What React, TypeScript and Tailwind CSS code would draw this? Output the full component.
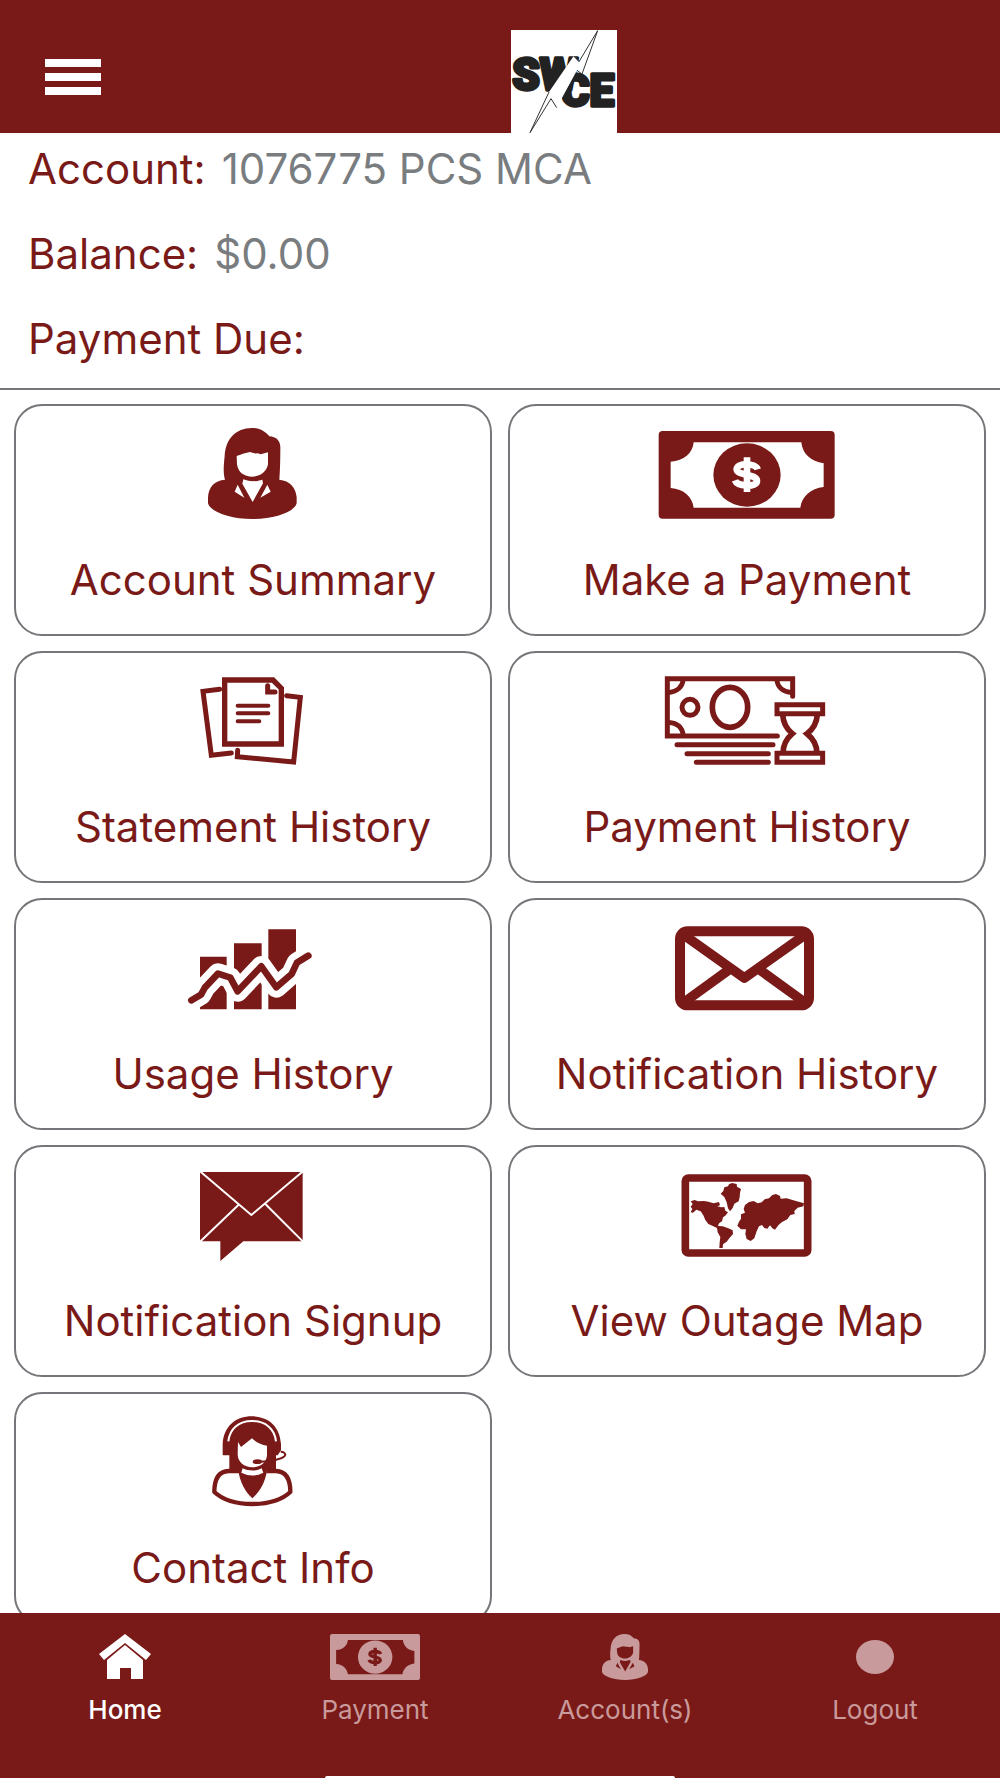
import React from "react";

type IconProps = { className?: string; viewBox?: string; cut?: string };

const TILE_ICON = "w-[210px] h-24";

function Logo() {
  return (
    <svg
      className="w-[106px] h-[103px] bg-white"
      viewBox="33 30 318 309"
      role="img"
      aria-label="SWCE"
    >
      <g
        fill="#222"
        stroke="#222"
        strokeWidth="10"
        strokeLinejoin="round"
        fontFamily="Roboto, sans-serif"
        fontWeight="900"
      >
        <text x="37" y="210" fontSize="132">SW</text>
        <text x="182" y="258" fontSize="132">CE</text>
      </g>
      <path
        fill="#fff"
        d="M293 32 237 125 221 108 147 216 90 338 153 236 170 263 231 151 246 162Z"
      />
      <path
        fill="none"
        stroke="#333"
        strokeWidth="3"
        d="M221 108 237 125 293 32 246 162 231 151M147 216 90 338 153 236 170 263"
      />
    </svg>
  );
}

function PersonIcon({
  className = TILE_ICON,
  viewBox = "-126 42 630 288",
}: IconProps) {
  return (
    <svg
      className={className}
      viewBox={viewBox}
      preserveAspectRatio="none"
      fill="currentColor"
      aria-hidden="true"
    >
      <path
        fillRule="evenodd"
        d="M186 54C136 54 107 88 104 138C101 165 99 190 105 209C73 211 56 232 54 262V280C60 305 120 327 187 327C255 327 314 305 320 280V262C317 232 300 212 268 209C270 184 271 145 271 112C271 92 258 80 238 79C225 63 207 54 186 54ZM140 138C155 133 168 128 180 126C190 130 198 131 203 130L212 133L234 127V163C230 186 210 200 187 200C162 200 144 187 141 163ZM160 208C180 216 200 215 217 209L219 220L188 276L157 221ZM143 224 163 263 134 245ZM232 224 242 245 211 263Z"
      />
    </svg>
  );
}

function CashIcon({
  className = TILE_ICON,
  viewBox = "6 27 630 288",
  cut = "#fff",
}: IconProps) {
  return (
    <svg
      className={className}
      viewBox={viewBox}
      preserveAspectRatio="none"
      fill="currentColor"
      aria-hidden="true"
    >
      <path
        fillRule="evenodd"
        d="M68 48H572Q584 48 584 60V299Q584 311 572 311H68Q56 311 56 299V60Q56 48 68 48ZM161 82C158 115 132 137 92 140V219C132 222 157 246 161 278H481C485 246 512 220 551 216V145C512 140 487 116 484 82Z"
      />
      <ellipse cx="321" cy="180" rx="101" ry="95" />
      <path
        fill="none"
        stroke={cut}
        strokeWidth="20"
        d="M321 127V231M353 163C347 143 290 142 290 163C290 183 351 175 351 198C351 218 292 215 285 196"
      />
    </svg>
  );
}

function StatementIcon() {
  return (
    <svg
      className={TILE_ICON}
      viewBox="-96 33 630 288"
      fill="none"
      stroke="currentColor"
      strokeWidth="15"
      strokeLinecap="round"
      aria-hidden="true"
    >
      <path d="M119 88 69 94 94 286 154 279M320 107 361 112 341 306 172 290 173 271" />
      <path strokeWidth="16" d="M134 60H279L304 85V252H134Z" />
      <path d="M263 77V96H285" />
      <path strokeWidth="12" d="M173 137H265M173 160H265M173 184H238" />
    </svg>
  );
}

function PaymentHistoryIcon() {
  return (
    <svg
      className={TILE_ICON}
      viewBox="6 33 630 288"
      fill="none"
      stroke="currentColor"
      strokeWidth="15"
      strokeLinecap="round"
      aria-hidden="true"
    >
      <path d="M458 109V56H82V228H412M111 254H399M141 281H385M169 307H385" />
      <path
        strokeWidth="14"
        strokeLinecap="butt"
        d="M130 58Q126 93 86 98M86 187Q126 190 130 226M410 58Q414 95 456 98"
      />
      <circle cx="150" cy="142" r="24" strokeWidth="15" />
      <ellipse cx="270" cy="142" rx="53" ry="60" strokeWidth="17" />
      <path d="M411 134H548V161H411ZM411 280H548V307H411Z" />
      <path
        strokeWidth="17"
        strokeLinecap="butt"
        d="M428 163Q430 199 457 221Q429 245 429 280M532 163Q530 199 501 221Q531 245 531 280"
      />
    </svg>
  );
}

function UsageIcon() {
  return (
    <svg
      className={TILE_ICON}
      viewBox="-66 24 630 288"
      fill="none"
      strokeLinecap="round"
      strokeLinejoin="round"
      aria-hidden="true"
    >
      <path
        fill="currentColor"
        d="M90 140H170V298H90ZM192 100H275V298H192ZM295 58H378V298H295Z"
      />
      <path
        stroke="#fff"
        strokeWidth="62"
        d="M64 271 93 254 105 232 144 191 181 203 203 244 274 169 319 232 365 192 381 158 415 137"
      />
      <path
        stroke="currentColor"
        strokeWidth="20"
        d="M64 271 93 254 105 232 144 191 181 203 203 244 274 169 319 232 365 192 381 158 415 137"
      />
    </svg>
  );
}

function EnvelopeIcon() {
  return (
    <svg
      className={TILE_ICON}
      viewBox="-24 24 630 288"
      fill="none"
      stroke="currentColor"
      strokeWidth="30"
      aria-hidden="true"
    >
      <rect x="90" y="64" width="387" height="222" rx="22" />
      <path
        strokeWidth="29"
        strokeLinejoin="round"
        d="M106 78 283 204 460 78M106 274 236 180M460 274 330 180"
      />
    </svg>
  );
}

function SignupIcon() {
  return (
    <svg
      className={TILE_ICON}
      viewBox="-96 45 630 288"
      fill="currentColor"
      aria-hidden="true"
    >
      <path d="M60 66H368V274H190L121 333V274H60Z" />
      <path
        fill="none"
        stroke="#fff"
        strokeWidth="6"
        d="M60 64 214 195 369 64M60 275 176 164M369 275 256 162"
      />
    </svg>
  );
}

function MapIcon() {
  return (
    <svg
      className={TILE_ICON}
      viewBox="-54 15 630 288"
      fill="currentColor"
      aria-hidden="true"
    >
      <rect
        x="76"
        y="54"
        width="367"
        height="225"
        rx="9"
        fill="none"
        stroke="currentColor"
        strokeWidth="23"
      />
      <path d="M92 124 104 120 114 124 132 123 145 125 161 130 177 126 180 136 172 139 184 142 193 141 196 152 204 157 196 167 189 172 186 184 177 190 174 198 188 199 205 205 218 211 219 222 209 233 200 245 189 253 188 264 178 264 179 247 181 231 173 217 171 204 160 199 145 192 136 180 130 166 122 154 109 149 99 158 92 157 97 147 92 140 98 132Z" />
      <path d="M207 73 216 69 230 72 231 80 243 87 240 98 239 112 236 124 223 131 218 144 210 154 204 145 200 127 193 111 182 101 190 93 193 82 204 79Z" />
      <path d="M255 135 267 126 281 123 293 130 305 127 314 118 327 115 337 105 348 102 360 108 362 116 380 115 400 121 432 130 430 139 413 143 403 153 404 162 391 165 382 178 365 187 355 196 345 209 337 205 330 196 322 206 313 204 306 195 297 199 290 214 283 235 272 243 260 237 256 222 258 208 243 208 232 197 237 185 243 176 243 163 255 158 251 147Z" />
    </svg>
  );
}

function ContactIcon() {
  return (
    <svg
      className={TILE_ICON}
      viewBox="-126 36 630 288"
      fill="currentColor"
      aria-hidden="true"
    >
      <path d="M98 164V132C101 79 137 49 186 49C235 49 270 79 273 132V151L263 166H258V211H118V166H105Q98 166 98 164Z" />
      <path
        fill="none"
        stroke="#fff"
        strokeWidth="6"
        d="M115 124C119 86 146 63 186 63C226 63 254 86 258 124"
      />
      <path
        stroke="currentColor"
        strokeWidth="13"
        strokeLinejoin="round"
        fill="#fff"
        d="M147 213H116C88 214 73 233 73 276C100 301 143 312 187 312C231 312 274 301 301 276C301 233 286 214 258 213H229"
      />
      <path d="M145 209 154 204H220L231 209C227 246 208 276 187 295C166 276 149 246 145 209Z" />
      <path
        fill="#fff"
        d="M144 126 153 141 186 115C199 128 214 134 231 137V165C230 188 211 202 187 202C163 202 143 186 143 163ZM158 205C175 214 201 214 215 205L220 218Q187 235 154 218Z"
      />
      <path
        fill="none"
        stroke="currentColor"
        strokeWidth="6"
        d="M205 185Q242 185 266 177Q285 172 286 164Q284 155 272 155"
      />
      <ellipse cx="202" cy="185" rx="14" ry="7" />
    </svg>
  );
}

function HomeIcon() {
  return (
    <svg
      className="w-[54px] h-[46px]"
      viewBox="0 0 54 46"
      fill="currentColor"
      aria-hidden="true"
    >
      <path d="M27 0 53 20 48 26 27 9 6 26 1 20Z" />
      <path d="M27 11 45 26V45H33V34H22V45H9V26Z" />
    </svg>
  );
}

function LogoutIcon() {
  return (
    <svg
      className="w-[38px] h-[46px]"
      viewBox="0 0 38 46"
      fill="currentColor"
      aria-hidden="true"
    >
      <ellipse cx="19" cy="23" rx="19" ry="17" />
    </svg>
  );
}

const tiles = [
  { label: "Account Summary", icon: <PersonIcon /> },
  { label: "Make a Payment", icon: <CashIcon /> },
  { label: "Statement History", icon: <StatementIcon /> },
  { label: "Payment History", icon: <PaymentHistoryIcon /> },
  { label: "Usage History", icon: <UsageIcon /> },
  { label: "Notification History", icon: <EnvelopeIcon /> },
  { label: "Notification Signup", icon: <SignupIcon /> },
  { label: "View Outage Map", icon: <MapIcon /> },
  { label: "Contact Info", icon: <ContactIcon /> },
];

const tabs = [
  { label: "Home", active: true, icon: <HomeIcon /> },
  {
    label: "Payment",
    active: false,
    icon: (
      <CashIcon
        className="w-[90px] h-[46px]"
        viewBox="56 48 528 263"
        cut="#791a18"
      />
    ),
  },
  {
    label: "Account(s)",
    active: false,
    icon: <PersonIcon className="w-[46px] h-[46px]" viewBox="54 54 266 273" />,
  },
  { label: "Logout", active: false, icon: <LogoutIcon /> },
];

const account = [
  { label: "Account:", value: "1076775 PCS MCA" },
  { label: "Balance:", value: "$0.00" },
  { label: "Payment Due:", value: "" },
];

export default function App() {
  return (
    <div className="flex flex-col h-screen overflow-hidden bg-white font-['Inter',sans-serif] text-[#791a18]">
      <header className="flex items-end shrink-0 bg-[#791a18] pt-[30px]">
        <div className="w-32 shrink-0 pl-[45px] pb-[38px]">
          <button
            type="button"
            aria-label="Menu"
            className="flex flex-col gap-[6px] w-14"
          >
            <span className="h-2 w-full bg-white" />
            <span className="h-2 w-full bg-white" />
            <span className="h-2 w-full bg-white" />
          </button>
        </div>
        <div className="flex flex-1 justify-center">
          <Logo />
        </div>
      </header>

      <dl className="shrink-0 border-b-2 border-[#77757a] px-7 text-[42px] leading-[72px]">
        {account.map((row) => (
          <div key={row.label} className="flex gap-4 h-[85px]">
            <dt>{row.label}</dt>
            <dd className="text-[#797d7f]">{row.value}</dd>
          </div>
        ))}
      </dl>

      <main className="flex-1 min-h-0 overflow-hidden px-[14px] pt-[14px]">
        <div className="grid grid-cols-2 gap-x-4 gap-y-[15px]">
          {tiles.map((tile) => (
            <button
              key={tile.label}
              type="button"
              className="flex flex-col items-center h-[232px] pt-[18px] border-2 border-[#77757a] rounded-[28px] text-[42px] leading-[48px] whitespace-nowrap"
            >
              {tile.icon}
              <span className="mt-9">{tile.label}</span>
            </button>
          ))}
        </div>
      </main>

      <nav className="shrink-0 bg-[#791a18]">
        <div className="grid grid-cols-4 h-[163px] pt-[21px]">
          {tabs.map((tab) => (
            <a
              key={tab.label}
              href="#"
              className={
                tab.active
                  ? "flex flex-col items-center gap-[14px] text-[26px] leading-8 font-medium text-white"
                  : "flex flex-col items-center gap-[14px] text-[26px] leading-8 text-[#c99a9b]"
              }
            >
              {tab.icon}
              <span>{tab.label}</span>
            </a>
          ))}
        </div>
        <div className="mx-auto h-[2px] w-[35%] rounded-t-full bg-white" />
      </nav>
    </div>
  );
}
